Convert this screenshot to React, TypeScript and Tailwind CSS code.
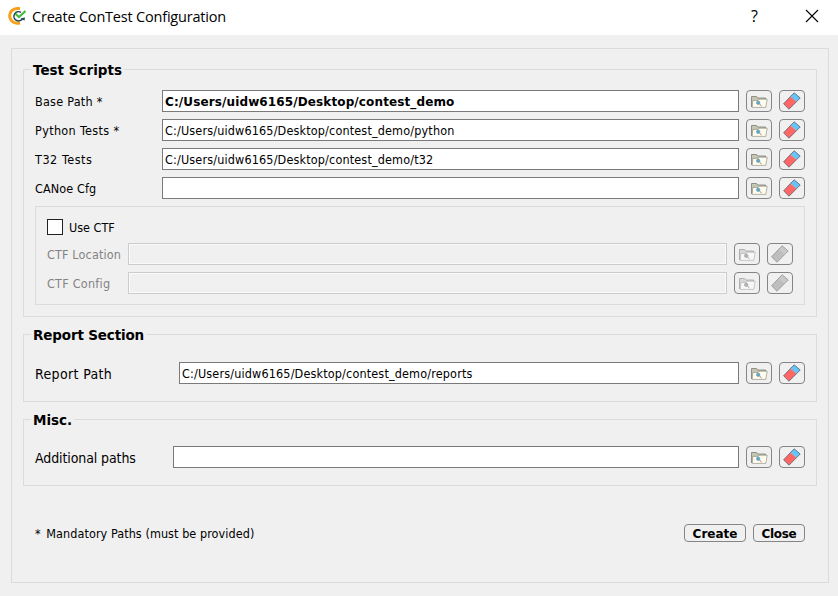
import React, { useState } from 'react';

function AppLogo() {
  return (
    <svg width="19" height="20" viewBox="0 0 19 20" fill="none" className="ml-[7px] mt-[6px] shrink-0">
      <path d="M13 2.4H10A7.3 7.3 0 0 0 10 17.2H13" stroke="#f9a11b" strokeWidth="3" />
      <path d="M14 6.4A4.6 4.6 0 1 0 15.4 12.8" stroke="#24485c" strokeWidth="1.6" />
      <path d="M13.8 12.2l4.2-.6-.6 3.2z" fill="#24485c" />
      <path d="M8.4 7.8l3.6 3.2L18.6 5" stroke="#43b93c" strokeWidth="2.1" />
    </svg>
  );
}

function FolderIcon({ off }: { off?: boolean }) {
  const line = off ? '#a9a9a9' : '#85857a';
  return (
    <svg width="18" height="16" viewBox="0 0 18 16" fill="none" className="shrink-0">
      <path d="M1.5 14V3.5H6.5l1.2 1.5h7.8v3" fill={off ? '#d8d8d8' : '#c6c6b4'} stroke={line} strokeWidth=".9" />
      <path d="M2.2 14.4L2.8 7.4h5.4l1-1.2h8L15.8 14.4z" fill={off ? '#f7f7f7' : '#fffcee'} stroke={line} strokeWidth=".6" />
      <path d="M9.4 11l2.2 2" stroke={off ? '#a0a0a0' : '#a27b60'} strokeWidth="1" />
      <circle cx="8.2" cy="9.8" r="1.7" fill={off ? '#b5b5b5' : '#4fb0dc'} stroke={off ? '#999' : '#6d8c99'} strokeWidth=".6" />
    </svg>
  );
}

function EraserIcon({ off }: { off?: boolean }) {
  const line = off ? '#929292' : '#5c5f68';
  return (
    <svg width="18" height="18" viewBox="0 0 18 18" fill="none" className="shrink-0">
      <path d="M.6 11.8L7.6 4.4l6 5.2L6 17.2z" fill={off ? '#bebebe' : '#ff6767'} stroke={line} strokeWidth=".8" strokeLinejoin="round" />
      <path d="M7.6 4.4L11.2.8l6 5.2-3.6 3.6z" fill={off ? '#c9c9c9' : '#62c5fb'} stroke={line} strokeWidth=".8" strokeLinejoin="round" />
      <path d="M7.9 4.7l5.4 4.7" stroke={off ? '#ddd' : '#d9d3d9'} strokeWidth=".9" />
    </svg>
  );
}

const toolButton =
  'flex h-[22px] w-[26px] shrink-0 items-center justify-center rounded-[4px] border border-[#858585] bg-[#f0f0f0]';

const boldText = "font-['DejaVu_Sans',sans-serif] font-bold [font-stretch:normal]";

interface RowProps {
  label: string;
  labelClass: string;
  value?: string;
  valueClass?: string;
  off?: boolean;
}

function PathRow({ label, labelClass, value = '', valueClass = 'tracking-[0.16px]', off }: RowProps) {
  return (
    <div className="flex h-[22px] items-center">
      <div className={`shrink-0 whitespace-nowrap pt-px ${labelClass}`}>{label}</div>
      <div
        className={`flex h-[22px] min-w-0 flex-1 items-center border pl-[2px] ${
          off ? 'border-[#cccccc] bg-[#f0f0f0] shadow-[inset_0_0_0_1px_#fafafa]' : 'border-[#7a7a7a] bg-white'
        }`}
      >
        <span className={`whitespace-nowrap pt-px ${valueClass}`}>{value}</span>
      </div>
      <button className={`ml-[7px] ${toolButton}`} disabled={off}>
        <FolderIcon off={off} />
      </button>
      <button className={`ml-[7px] ${toolButton}`} disabled={off}>
        <EraserIcon off={off} />
      </button>
    </div>
  );
}

function Group({ title, titleClass, className, children }: { title: string; titleClass: string; className: string; children: React.ReactNode }) {
  return (
    <section className={`border border-[#dcdcdc] px-[11px] ${className}`}>
      <h2 className={`-ml-[4px] -mt-[10px] h-[20px] bg-[#f0f0f0] pl-[2px] text-[13.5px] leading-[20px] whitespace-nowrap ${boldText} ${titleClass}`}>
        {title}
      </h2>
      {children}
    </section>
  );
}

export default function App() {
  const [useCtf, setUseCtf] = useState(false);
  return (
    <div className="flex h-[596px] w-[838px] flex-col bg-[#f0f0f0] font-['DejaVu_Sans_Condensed','DejaVu_Sans',sans-serif] text-[12.5px] leading-[16px] text-black [font-stretch:condensed]">
      <header className="flex h-[35px] shrink-0 bg-white">
        <AppLogo />
        <h1 className="ml-[6px] mt-[7px] font-['Open_Sans','Noto_Sans',sans-serif] text-[14.5px] leading-[20px] [font-stretch:normal] tracking-[-0.2px]">
          Create ConTest Configuration
        </h1>
        <span className="ml-auto mr-[47px] mt-[6px] font-['Open_Sans','Noto_Sans',sans-serif] text-[16px] leading-[20px] [font-stretch:normal]">?</span>
        <svg width="14" height="14" viewBox="0 0 14 14" className="mr-[19px] mt-[9px]" fill="none">
          <path d="M1 1l12 12M13 1L1 13" stroke="#000" strokeWidth="1.1" />
        </svg>
      </header>

      <main className="mb-[13px] ml-[11px] mr-[9px] mt-[13px] flex min-h-0 flex-1 flex-col border border-[#dcdcdc] px-[11px] pt-[20px]">
        <Group title="Test Scripts" titleClass="w-[93px]" className="h-[248px]">
          <div className="mt-[10px] flex flex-col gap-[7px]">
            <PathRow label="Base Path *" labelClass="w-[127px] tracking-[0.25px]" value="C:/Users/uidw6165/Desktop/contest_demo" valueClass={`text-[12px] tracking-[0.12px] ${boldText}`} />
            <PathRow label="Python Tests *" labelClass="w-[127px] tracking-[0.35px]" value="C:/Users/uidw6165/Desktop/contest_demo/python" />
            <PathRow label="T32 Tests" labelClass="w-[127px] tracking-[0.55px]" value="C:/Users/uidw6165/Desktop/contest_demo/t32" />
            <PathRow label="CANoe Cfg" labelClass="w-[127px] tracking-[0.1px]" />
          </div>
          <div className="mt-[7px] h-[99px] border border-[#dcdcdc] px-[11px] pt-[12px]">
            <label className="flex h-[16px] items-center gap-[6px]">
              <input
                type="checkbox"
                checked={useCtf}
                onChange={(e) => setUseCtf(e.target.checked)}
                className="h-[16px] w-[16px] appearance-none border border-[#222] bg-white checked:bg-[#333]"
              />
              <span className="pt-px">Use CTF</span>
            </label>
            <div className="mt-[8px] flex flex-col gap-[7px]">
              <PathRow label="CTF Location" labelClass="w-[81px] tracking-[0.15px] text-[#838383]" off />
              <PathRow label="CTF Config" labelClass="w-[81px] tracking-[0.25px] text-[#838383]" off />
            </div>
          </div>
        </Group>

        <Group title="Report Section" titleClass="w-[115px] tracking-[-0.15px]" className="mt-[17px] h-[68px]">
          <div className="mt-[17px]">
            <PathRow label="Report Path" labelClass="w-[144px] text-[14px] tracking-[0.35px]" value="C:/Users/uidw6165/Desktop/contest_demo/reports" />
          </div>
        </Group>

        <Group title="Misc." titleClass="w-[43px]" className="mt-[17px] h-[67px]">
          <div className="mt-[16px]">
            <PathRow label="Additional paths" labelClass="w-[138px] text-[14px] tracking-[-0.1px]" />
          </div>
        </Group>

        <footer className="ml-[12px] mr-[12px] mt-[38px] flex h-[18px] items-center">
          <span className="mr-auto pt-px tracking-[0.07px]">
            <span className="mr-[2px]">*</span> Mandatory Paths (must be provided)
          </span>
          <button className={`flex h-[18px] w-[62px] items-center justify-center rounded-[4px] border border-[#858585] pt-[2px] text-[12px] leading-[16px] ${boldText}`}>Create</button>
          <button className={`ml-[7px] flex h-[18px] w-[52px] items-center justify-center rounded-[4px] border border-[#858585] pt-[2px] text-[12px] leading-[16px] tracking-[-0.3px] ${boldText}`}>Close</button>
        </footer>
      </main>
    </div>
  );
}
